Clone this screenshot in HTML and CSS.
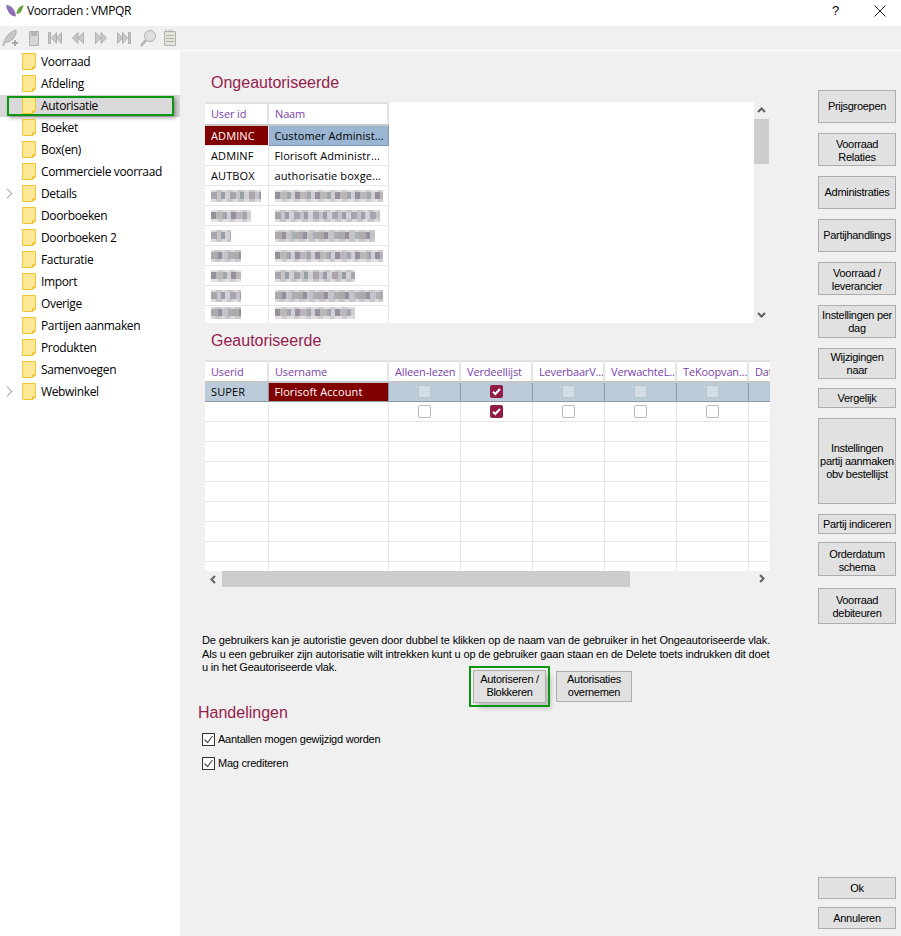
FILE: index.html
```html
<!DOCTYPE html>
<html lang="en">
<head>
    <meta charset="UTF-8">
    <meta name="viewport" content="width=device-width, initial-scale=1.0">
    <title>Voorraden : VMPQR</title>
    <link rel="stylesheet" href="styles.css">
</head>
<body>
    <svg class="defs" width="0" height="0">
        <symbol id="folder" viewBox="0 0 14 17">
            <path d="M.5.5h13v13.500h-3v2.500h-10z" fill="#fde995" stroke="#efc534"/>
            <path d="M10.500 16.500v-2.500h3z" fill="#efc534" stroke="#efc534"/>
        </symbol>
        <symbol id="chk" viewBox="0 0 13 13">
            <rect x=".5" y=".5" width="12" height="12" rx="1.500" fill="#fff" stroke="#b8b8b8"/>
        </symbol>
        <symbol id="chk-on" viewBox="0 0 13 13">
            <rect width="13" height="13" rx="2" fill="#8f1c45"/>
            <path d="M3 6.800l2.300 2.200 4.700-5" fill="none" stroke="#fff" stroke-width="2"/>
        </symbol>
        <symbol id="tick" viewBox="0 0 13 13">
            <rect x=".5" y=".5" width="12" height="12" fill="#fff" stroke="#333"/>
            <path d="M2.500 6.500l3 3 5-6.500" fill="none" stroke="#555" stroke-width="1.200"/>
        </symbol>
    </svg>

    <div class="titlebar">
        <svg class="logo" width="18" height="12" viewBox="0 0 18 12">
            <path d="M0 0c5 0 9 4 10 11.500C5 11.500 1 7 0 0z" fill="#8d6fb3"/>
            <path d="M17.500 0c-4 1-6.500 4-7 9 4 0 6-4 7-9z" fill="#5fa33a"/>
        </svg>
        <span class="title">Voorraden : VMPQR</span>
        <span class="help">?</span>
        <svg class="close" width="12" height="12" viewBox="0 0 12 12">
            <path d="M.5.500l11 11M11.500.500l-11 11" stroke="#222" fill="none"/>
        </svg>
    </div>

    <div class="toolbar">
        <svg width="180" height="24" viewBox="0 0 180 24">
            <g fill="#c8c8c8" stroke="#b0b0b0">
                <path d="M3 20c1-8 6-14 13-16l0 4-3 5-4 3-3 0z"/>
                <path d="M12 17h6M15 14v6" stroke-width="2" stroke="#a8a8a8"/>
                <path d="M29.500 5.500h9v14h-9z" fill="#d6d6d6"/>
                <path d="M31.500 5.500h5v4h-5z" fill="#b4b4b4"/>
                <path d="M48.500 6.500h2v11h-2zM61.500 6.500l-5 5.500 5 5.500zM56.500 6.500l-5 5.500 5 5.500z"/>
                <path d="M83.500 6.500l-5.500 5.500 5.500 5.500zM78 6.500l-5.500 5.500 5.500 5.500z"/>
                <path d="M95.500 6.500l5.500 5.500-5.500 5.500zM101 6.500l5.500 5.500-5.500 5.500z"/>
                <path d="M117.500 6.500l5 5.500-5 5.500zM122.500 6.500l5 5.500-5 5.500zM128.500 6.500h2v11h-2z"/>
                <circle cx="150" cy="10" r="5.500" fill="#dedede"/>
                <path d="M146 14l-5 6" stroke-width="2.500"/>
                <path d="M164.500 5.500h11v14h-11z" fill="#e4e4d8"/>
                <path d="M166 9.500h8M166 12.500h8M166 15.500h8M166 3.500v3M169 3.500v3M172 3.500v3" fill="none"/>
            </g>
        </svg>
    </div>
    <div class="divider"></div>

    <div class="main">
        <ul class="tree">
            <li class="node"><span class="arrow"></span><svg class="folder"><use href="#folder"/></svg>Voorraad</li>
            <li class="node"><span class="arrow"></span><svg class="folder"><use href="#folder"/></svg>Afdeling</li>
            <li class="node selected"><span class="arrow"></span><svg class="folder"><use href="#folder"/></svg>Autorisatie</li>
            <li class="node"><span class="arrow"></span><svg class="folder"><use href="#folder"/></svg>Boeket</li>
            <li class="node"><span class="arrow"></span><svg class="folder"><use href="#folder"/></svg>Box(en)</li>
            <li class="node"><span class="arrow"></span><svg class="folder"><use href="#folder"/></svg>Commerciele voorraad</li>
            <li class="node"><span class="arrow closed"></span><svg class="folder"><use href="#folder"/></svg>Details</li>
            <li class="node"><span class="arrow"></span><svg class="folder"><use href="#folder"/></svg>Doorboeken</li>
            <li class="node"><span class="arrow"></span><svg class="folder"><use href="#folder"/></svg>Doorboeken 2</li>
            <li class="node"><span class="arrow"></span><svg class="folder"><use href="#folder"/></svg>Facturatie</li>
            <li class="node"><span class="arrow"></span><svg class="folder"><use href="#folder"/></svg>Import</li>
            <li class="node"><span class="arrow"></span><svg class="folder"><use href="#folder"/></svg>Overige</li>
            <li class="node"><span class="arrow"></span><svg class="folder"><use href="#folder"/></svg>Partijen aanmaken</li>
            <li class="node"><span class="arrow"></span><svg class="folder"><use href="#folder"/></svg>Produkten</li>
            <li class="node"><span class="arrow"></span><svg class="folder"><use href="#folder"/></svg>Samenvoegen</li>
            <li class="node"><span class="arrow closed"></span><svg class="folder"><use href="#folder"/></svg>Webwinkel</li>
        </ul>

        <div class="center">
            <h2 class="heading first">Ongeautoriseerde</h2>
            <div class="panel-top">
                <div class="grid-wrap top-wrap">
                    <table class="grid short">
                        <colgroup><col class="c-id"><col class="c-name"></colgroup>
                        <tr class="head"><th>User id</th><th>Naam</th></tr>
                        <tr><td class="maroon">ADMINC</td><td class="blue">Customer Administ...</td></tr>
                        <tr><td>ADMINF</td><td>Florisoft Administr...</td></tr>
                        <tr><td>AUTBOX</td><td>authorisatie boxge...</td></tr>
                        <tr><td><i class="mos m1" style="width:50px"></i></td><td><i class="mos m2" style="width:108px"></i></td></tr>
                        <tr><td><i class="mos m2" style="width:40px"></i></td><td><i class="mos m1" style="width:105px"></i></td></tr>
                        <tr><td><i class="mos m1" style="width:20px"></i></td><td><i class="mos m3" style="width:100px"></i></td></tr>
                        <tr><td><i class="mos m3" style="width:30px"></i></td><td><i class="mos m2" style="width:108px"></i></td></tr>
                        <tr><td><i class="mos m2" style="width:30px"></i></td><td><i class="mos m1" style="width:80px"></i></td></tr>
                        <tr><td><i class="mos m1" style="width:30px"></i></td><td><i class="mos m3" style="width:108px"></i></td></tr>
                        <tr class="cut"><td><i class="mos m3" style="width:30px"></i></td><td><i class="mos m2" style="width:80px"></i></td></tr>
                    </table>
                </div>
                <div class="vscroll">
                    <svg width="15" height="17" viewBox="0 0 15 17"><path d="M4 10l3.500-3.500 3.500 3.500" fill="none" stroke="#606060" stroke-width="2"/></svg>
                    <div class="vthumb"></div>
                    <svg class="vdown" width="15" height="17" viewBox="0 0 15 17"><path d="M4 7l3.500 3.500 3.500-3.500" fill="none" stroke="#606060" stroke-width="2"/></svg>
                </div>
            </div>

            <h2 class="heading second">Geautoriseerde</h2>
            <div class="panel-bottom">
                <div class="grid-wrap bottom-wrap">
                    <table class="grid wide">
                        <colgroup><col class="c-id"><col class="c-name"><col class="c-flag"><col class="c-flag"><col class="c-flag"><col class="c-flag"><col class="c-flag"><col class="c-flag"></colgroup>
                        <tr class="head"><th>Userid</th><th>Username</th><th>Alleen-lezen</th><th>Verdeellijst</th><th>LeverbaarV...</th><th>VerwachteL...</th><th>TeKoopvan...</th><th>Dat</th></tr>
                        <tr class="sel-row"><td>SUPER</td><td class="maroon">Florisoft Account</td><td class="ctr"><svg class="box dim"><use href="#chk"/></svg></td><td class="ctr"><svg class="box"><use href="#chk-on"/></svg></td><td class="ctr"><svg class="box dim"><use href="#chk"/></svg></td><td class="ctr"><svg class="box dim"><use href="#chk"/></svg></td><td class="ctr"><svg class="box dim"><use href="#chk"/></svg></td><td></td></tr>
                        <tr><td></td><td></td><td class="ctr"><svg class="box"><use href="#chk"/></svg></td><td class="ctr"><svg class="box"><use href="#chk-on"/></svg></td><td class="ctr"><svg class="box"><use href="#chk"/></svg></td><td class="ctr"><svg class="box"><use href="#chk"/></svg></td><td class="ctr"><svg class="box"><use href="#chk"/></svg></td><td></td></tr>
                        <tr><td></td><td></td><td></td><td></td><td></td><td></td><td></td><td></td></tr>
                        <tr><td></td><td></td><td></td><td></td><td></td><td></td><td></td><td></td></tr>
                        <tr><td></td><td></td><td></td><td></td><td></td><td></td><td></td><td></td></tr>
                        <tr><td></td><td></td><td></td><td></td><td></td><td></td><td></td><td></td></tr>
                        <tr><td></td><td></td><td></td><td></td><td></td><td></td><td></td><td></td></tr>
                        <tr><td></td><td></td><td></td><td></td><td></td><td></td><td></td><td></td></tr>
                        <tr><td></td><td></td><td></td><td></td><td></td><td></td><td></td><td></td></tr>
                        <tr><td></td><td></td><td></td><td></td><td></td><td></td><td></td><td></td></tr>
                    </table>
                </div>
                <div class="hscroll">
                    <svg width="17" height="15" viewBox="0 0 17 15"><path d="M10 4l-3.500 3.500 3.500 3.500" fill="none" stroke="#606060" stroke-width="2"/></svg>
                    <div class="hthumb"></div>
                    <svg class="hright" width="17" height="15" viewBox="0 0 17 15"><path d="M7 4l3.500 3.500-3.500 3.500" fill="none" stroke="#606060" stroke-width="2"/></svg>
                </div>
            </div>

            <p class="info"><span class="l1">De gebruikers kan je autoristie geven door dubbel te klikken op de naam van de gebruiker in het Ongeautoriseerde vlak.</span><span class="l2">Als u een gebruiker zijn autorisatie wilt intrekken kunt u op de gebruiker gaan staan en de Delete toets indrukken dit doet</span><span class="l3">u in het Geautoriseerde vlak.</span></p>

            <div class="actions">
                <button class="btn action-main">Autoriseren /<br>Blokkeren</button>
                <button class="btn action-copy">Autorisaties<br>overnemen</button>
            </div>

            <h2 class="heading third">Handelingen</h2>
            <label class="check"><svg class="tick"><use href="#tick"/></svg>Aantallen mogen gewijzigd worden</label>
            <label class="check"><svg class="tick"><use href="#tick"/></svg>Mag crediteren</label>
        </div>

        <div class="side">
            <button class="btn s33">Prijsgroepen</button>
            <button class="btn s33 two">Voorraad<br>Relaties</button>
            <button class="btn s33">Administraties</button>
            <button class="btn s33">Partijhandlings</button>
            <button class="btn s33 two">Voorraad /<br>leverancier</button>
            <button class="btn s33">Instellingen per<br>dag</button>
            <button class="btn s31">Wijzigingen<br>naar</button>
            <button class="btn s20">Vergelijk</button>
            <button class="btn s86">Instellingen<br>partij aanmaken<br>obv bestellijst</button>
            <button class="btn s20">Partij indiceren</button>
            <button class="btn s34">Orderdatum<br>schema</button>
            <button class="btn s36 two">Voorraad<br>debiteuren</button>
            <button class="btn s22 ok">Ok</button>
            <button class="btn s22">Annuleren</button>
        </div>
    </div>
</body>
</html>
```

FILE: styles.css
```css
* {
    box-sizing: border-box;
}
html, body {
    margin: 0;
    height: 100%;
}
body {
    width: 901px;
    height: 936px;
    overflow: hidden;
    background: #fff;
    color: #000;
    font-family: "Liberation Sans", Arial, sans-serif;
    font-size: 12px;
    display: flex;
    flex-direction: column;
}
.defs {
    position: absolute;
}

/* title bar */
.titlebar {
    height: 26px;
    flex: none;
    display: flex;
    align-items: center;
    padding: 0 0 5px 6px;
    background: #fff;
    font-family: "Open Sans", sans-serif;
}
.logo {
    margin-right: 3px;
}
.title {
    font-size: 12px;
    letter-spacing: -0.4px;
    flex: 1;
}
.help {
    font-family: "Liberation Sans", sans-serif;
    font-size: 13px;
    width: 44px;
}
.close {
    margin-right: 15px;
    margin-left: -2px;
}

.toolbar {
    height: 24px;
    background: #f0f0f0;
    flex: none;
}
.toolbar svg {
    display: block;
}
.divider {
    height: 1px;
    background: #fff;
    flex: none;
}

.main {
    flex: 1;
    display: flex;
    min-height: 0;
}

/* tree */
.tree {
    list-style: none;
    margin: 0;
    padding: 0;
    width: 180px;
    flex: none;
    background: #fff;
    font-family: "Open Sans", sans-serif;
    font-size: 12px;
    letter-spacing: -0.35px;
}
.node {
    height: 22px;
    display: flex;
    align-items: center;
    position: relative;
    white-space: nowrap;
    padding-bottom: 2px;
}
.arrow {
    width: 22px;
    height: 22px;
    flex: none;
    position: relative;
}
.arrow.closed::before {
    content: "";
    position: absolute;
    left: 4px;
    top: 8px;
    width: 6px;
    height: 6px;
    border-top: 1.5px solid #a6a6a6;
    border-right: 1.5px solid #a6a6a6;
    transform: rotate(45deg);
}
.folder {
    width: 14px;
    height: 17px;
    margin-right: 5px;
    flex: none;
}
.selected {
    background: #d9d9d9;
}
.selected::after {
    content: "";
    position: absolute;
    left: 7px;
    top: 1px;
    width: 167px;
    height: 20px;
    box-sizing: border-box;
    border: 2px solid #0b9712;
    box-shadow: 2px 2px 4px rgba(0, 0, 0, 0.35);
}

/* centre column */
.center {
    width: 638px;
    flex: none;
    background: #f0f0f0;
    padding-left: 25px;
    position: relative;
}
.heading {
    margin: 0;
    font-weight: normal;
    font-size: 16px;
    line-height: 20px;
    color: #95204d;
}
.heading.first {
    padding: 22px 0 9px 6px;
}
.heading.second {
    padding: 8px 0 9px 6px;
}
.heading.third {
    margin-left: -7px;
    padding-bottom: 10px;
}

.panel-top {
    display: flex;
    height: 221px;
}
.grid-wrap {
    background: #fff;
    overflow: hidden;
}
.top-wrap {
    width: 549px;
}
.vscroll {
    width: 15px;
    position: relative;
}
.vscroll svg {
    display: block;
}
.vthumb {
    height: 45px;
    background: #cdcdcd;
}
.vdown {
    position: absolute;
    left: 0;
    bottom: 0;
}

.panel-bottom {
    width: 565px;
    height: 227px;
}
.bottom-wrap {
    height: 211px;
}
.hscroll {
    height: 16px;
    display: flex;
    align-items: center;
    position: relative;
}
.hthumb {
    width: 408px;
    height: 16px;
    background: #cdcdcd;
}
.hright {
    position: absolute;
    right: 0;
    top: 0;
}

/* tables */
.grid {
    border-collapse: collapse;
    table-layout: fixed;
    font-family: "Open Sans", sans-serif;
    font-size: 11px;
    letter-spacing: 0.1px;
}
.grid.short {
    width: 184px;
}
.grid.wide {
    width: 615px;
}
.c-id {
    width: 63px;
}
.c-name {
    width: 120px;
}
.c-flag {
    width: 72px;
}
.grid th, .grid td {
    height: 20px;
    padding: 0 0 0 6px;
    border: 1px solid #e6e6e6;
    border-top: 0;
    border-left: 0;
    text-align: left;
    white-space: nowrap;
    overflow: hidden;
    line-height: 1;
}
.grid th {
    height: 21px;
    font-weight: normal;
    letter-spacing: -0.15px;
    color: #7b3fa8;
    border-top: 2px solid #e0e0e0;
    border-bottom: 2px solid #c6c6c6;
    border-right: 2px solid #e4e4e4;
}
.short th {
    height: 22px;
    padding-bottom: 1px;
}
.grid .ctr {
    text-align: center;
    padding: 0;
}
.maroon {
    background: #800000;
    color: #fff;
}
.blue {
    background: #9ab6d3;
    border-color: #7e9ab8 !important;
}
.sel-row td {
    background: #bccbd9;
    border-color: #8b99a8;
    height: 19px;
}
.sel-row td.maroon {
    background: #800000;
    color: #fff;
}
.box {
    display: block;
    width: 13px;
    height: 13px;
    margin: 0 auto;
}
.box.dim {
    opacity: 0.35;
}
.cut td {
    height: 18px;
    border-bottom: 0;
    vertical-align: top;
}
.mos {
    display: block;
    height: 12px;
    margin-top: 1px;
    background-color: #ebeaed;
}
.m1 {
    background-image:
        repeating-linear-gradient(90deg, #a9a4ae 0 6px, #c6c4c9 6px 10px, #989fa6 10px 14px, #d2d1d6 14px 19px),
        repeating-linear-gradient(90deg, #dcdbde 0 5px, #c8c5ca 5px 11px);
    background-size: 100% 7px, 100% 12px;
    background-position: 0 2px, 0 0;
    background-repeat: no-repeat;
}
.m2 {
    background-image:
        repeating-linear-gradient(90deg, #988f9e 0 5px, #bbb7b8 5px 12px, #a0a8ae 12px 16px, #cfced3 16px 20px),
        repeating-linear-gradient(90deg, #e0dfe2 0 7px, #cecbd1 7px 12px);
    background-size: 100% 7px, 100% 12px;
    background-position: 0 2px, 0 0;
    background-repeat: no-repeat;
}
.m3 {
    background-image:
        repeating-linear-gradient(90deg, #aea9ab 0 7px, #968f9e 7px 11px, #c4c3c8 11px 17px, #a9b0b5 17px 21px),
        repeating-linear-gradient(90deg, #dad9dd 0 4px, #c9c6cc 4px 10px);
    background-size: 100% 7px, 100% 12px;
    background-position: 0 2px, 0 0;
    background-repeat: no-repeat;
}

/* text under the grids */
.info {
    margin: 47px 0 0 -3px;
    width: 580px;
    font-size: 11px;
    line-height: 13.500px;
    white-space: nowrap;
}
.info span {
    display: block;
}
.l1 {
    letter-spacing: -0.14px;
}
.l2 {
    letter-spacing: -0.16px;
}
.l3 {
    letter-spacing: -0.2px;
}

.btn {
    display: block;
    padding: 0;
    background: #e1e1e1;
    border: 1px solid #adadad;
    border-radius: 0;
    font-family: "Liberation Sans", Arial, sans-serif;
    font-size: 11px;
    line-height: 13px;
    letter-spacing: -0.3px;
    color: #000;
    text-align: center;
    white-space: nowrap;
}
.btn.two {
    padding-top: 2px;
}

.actions {
    display: flex;
    height: 33px;
    margin: -5px 0 0 267px;
    align-items: flex-start;
}
.action-main {
    width: 73px;
    height: 33px;
    margin: 0 10px 0 1px;
    outline: 2px solid #0b9712;
    outline-offset: 2px;
    box-shadow: 5px 5px 5px rgba(0, 0, 0, 0.2);
}
.action-copy {
    width: 76px;
    height: 31px;
    margin-top: 1px;
}

.check {
    display: flex;
    align-items: center;
    height: 13px;
    margin: 0 0 11px -3px;
    font-size: 11px;
    letter-spacing: -0.24px;
}
.tick {
    width: 13px;
    height: 13px;
    margin-right: 3px;
    flex: none;
}

/* right hand buttons */
.side {
    flex: 1;
    background: #f0f0f0;
    padding-top: 39px;
    display: flex;
    flex-direction: column;
}
.side .btn {
    width: 78px;
    flex: none;
}
.s33 {
    height: 33px;
    margin-bottom: 10px;
}
.s31 {
    height: 31px;
    margin-bottom: 9px;
}
.s20 {
    height: 20px;
    margin-bottom: 10px;
}
.s86 {
    height: 86px;
    margin-bottom: 10px;
}
.s34 {
    height: 34px;
    margin: -2px 0 12px;
    padding-top: 4px;
}
.s36 {
    height: 36px;
}
.s22 {
    height: 22px;
    margin-bottom: 7px;
}
.ok {
    margin-top: auto;
    margin-bottom: 8px;
}
```
